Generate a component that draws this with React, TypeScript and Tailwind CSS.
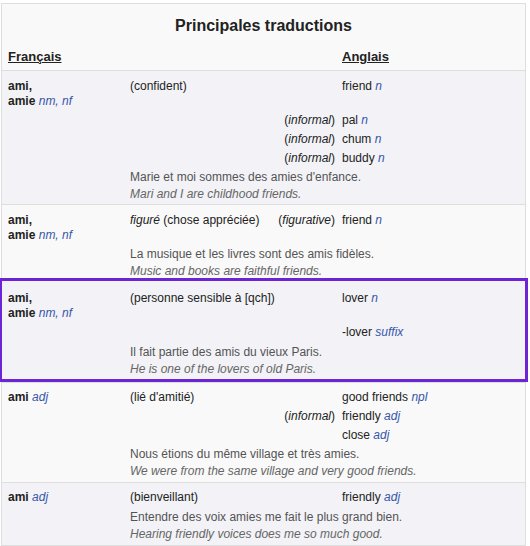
import React from 'react'

type Kids = { children: React.ReactNode }

function Pos({ children }: Kids) {
  return <i className="text-[#3656a8]">{children}</i>
}

function Note({ children }: Kids) {
  return (
    <span>
      (<i>{children}</i>)
    </span>
  )
}

function Head({ word, pos }: { word: string; pos: string }) {
  return (
    <>
      <b>{word}</b> <Pos>{pos}</Pos>
    </>
  )
}

function AmiAmie() {
  return (
    <>
      <b>ami,</b>
      <br />
      <b>amie</b> <Pos>nm, nf</Pos>
    </>
  )
}

interface LineProps {
  fr?: React.ReactNode
  sense?: React.ReactNode
  note?: React.ReactNode
  en?: React.ReactNode
}

function Line({ fr, sense, note, en }: LineProps) {
  return (
    <div className="grid grid-cols-[128px_212px_1fr] py-[2px] leading-[15px]">
      <div className="pl-[6px]">{fr}</div>
      <div className="flex justify-between pr-[7px]">
        <span>{sense}</span>
        <span>{note}</span>
      </div>
      <div>{en}</div>
    </div>
  )
}

function Example({ fr, en }: { fr: string; en: string }) {
  return (
    <div className="pl-[128px]">
      <div className="pt-[2px] leading-[15px] text-[#545454]">{fr}</div>
      <div className="pt-[2px] leading-[15px] italic text-[#666]">{en}</div>
    </div>
  )
}

export default function App() {
  return (
    <div className="min-h-screen bg-white pt-[3px] pl-[1px] font-['Liberation_Sans',Arial,sans-serif] text-[12px] text-[#222]">
      <div className="w-[525px] border border-[#dedede] bg-[#f9f9f9]">
        <div className="pt-[12px] text-center text-[16px] font-bold leading-[19px]">
          Principales traductions
        </div>
        <div className="grid grid-cols-[340px_1fr] pt-[14px] pb-[6px] text-[13px] font-bold leading-[15px]">
          <span className="pl-[6px]">
            <u>Français</u>
          </span>
          <span>
            <u>Anglais</u>
          </span>
        </div>

        <div className="border-t border-[#dedede] bg-[#f2f2f7] pt-[6px] pb-[2px]">
          <Line fr={<AmiAmie />} sense="(confident)" en={<>friend <Pos>n</Pos></>} />
          <Line note={<Note>informal</Note>} en={<>pal <Pos>n</Pos></>} />
          <Line note={<Note>informal</Note>} en={<>chum <Pos>n</Pos></>} />
          <Line note={<Note>informal</Note>} en={<>buddy <Pos>n</Pos></>} />
          <Example fr="Marie et moi sommes des amies d'enfance." en="Mari and I are childhood friends." />
        </div>

        <div className="border-t border-[#dedede] bg-[#f9f9f9] pt-[6px] pb-[2px]">
          <Line
            fr={<AmiAmie />}
            sense={<><i>figuré</i> (chose appréciée)</>}
            note={<Note>figurative</Note>}
            en={<>friend <Pos>n</Pos></>}
          />
          <Example fr="La musique et les livres sont des amis fidèles." en="Music and books are faithful friends." />
        </div>

        <div className="relative -mx-[3px] -mt-[3px] border-[3px] border-[#6b25d4] bg-[#f2f2f7] pt-[8px] pb-[2px]">
          <Line fr={<AmiAmie />} sense="(personne sensible à [qch])" en={<>lover <Pos>n</Pos></>} />
          <Line en={<>-lover <Pos>suffix</Pos></>} />
          <div className="h-px" />
          <Example fr="Il fait partie des amis du vieux Paris." en="He is one of the lovers of old Paris." />
        </div>

        <div className="border-t border-[#dedede] bg-[#f9f9f9] pt-[5px] pb-[3px]">
          <Line fr={<Head word="ami" pos="adj" />} sense="(lié d'amitié)" en={<>good friends <Pos>npl</Pos></>} />
          <Line note={<Note>informal</Note>} en={<>friendly <Pos>adj</Pos></>} />
          <Line en={<>close <Pos>adj</Pos></>} />
          <Example fr="Nous étions du même village et très amies." en="We were from the same village and very good friends." />
        </div>

        <div className="border-t border-[#dedede] bg-[#f2f2f7] pt-[5px] pb-[3px]">
          <Line fr={<Head word="ami" pos="adj" />} sense="(bienveillant)" en={<>friendly <Pos>adj</Pos></>} />
          <div className="h-px" />
          <Example fr="Entendre des voix amies me fait le plus grand bien." en="Hearing friendly voices does me so much good." />
        </div>

        <div className="h-[20px] border-t border-[#dedede] bg-[#f9f9f9]" />
      </div>
    </div>
  )
}
